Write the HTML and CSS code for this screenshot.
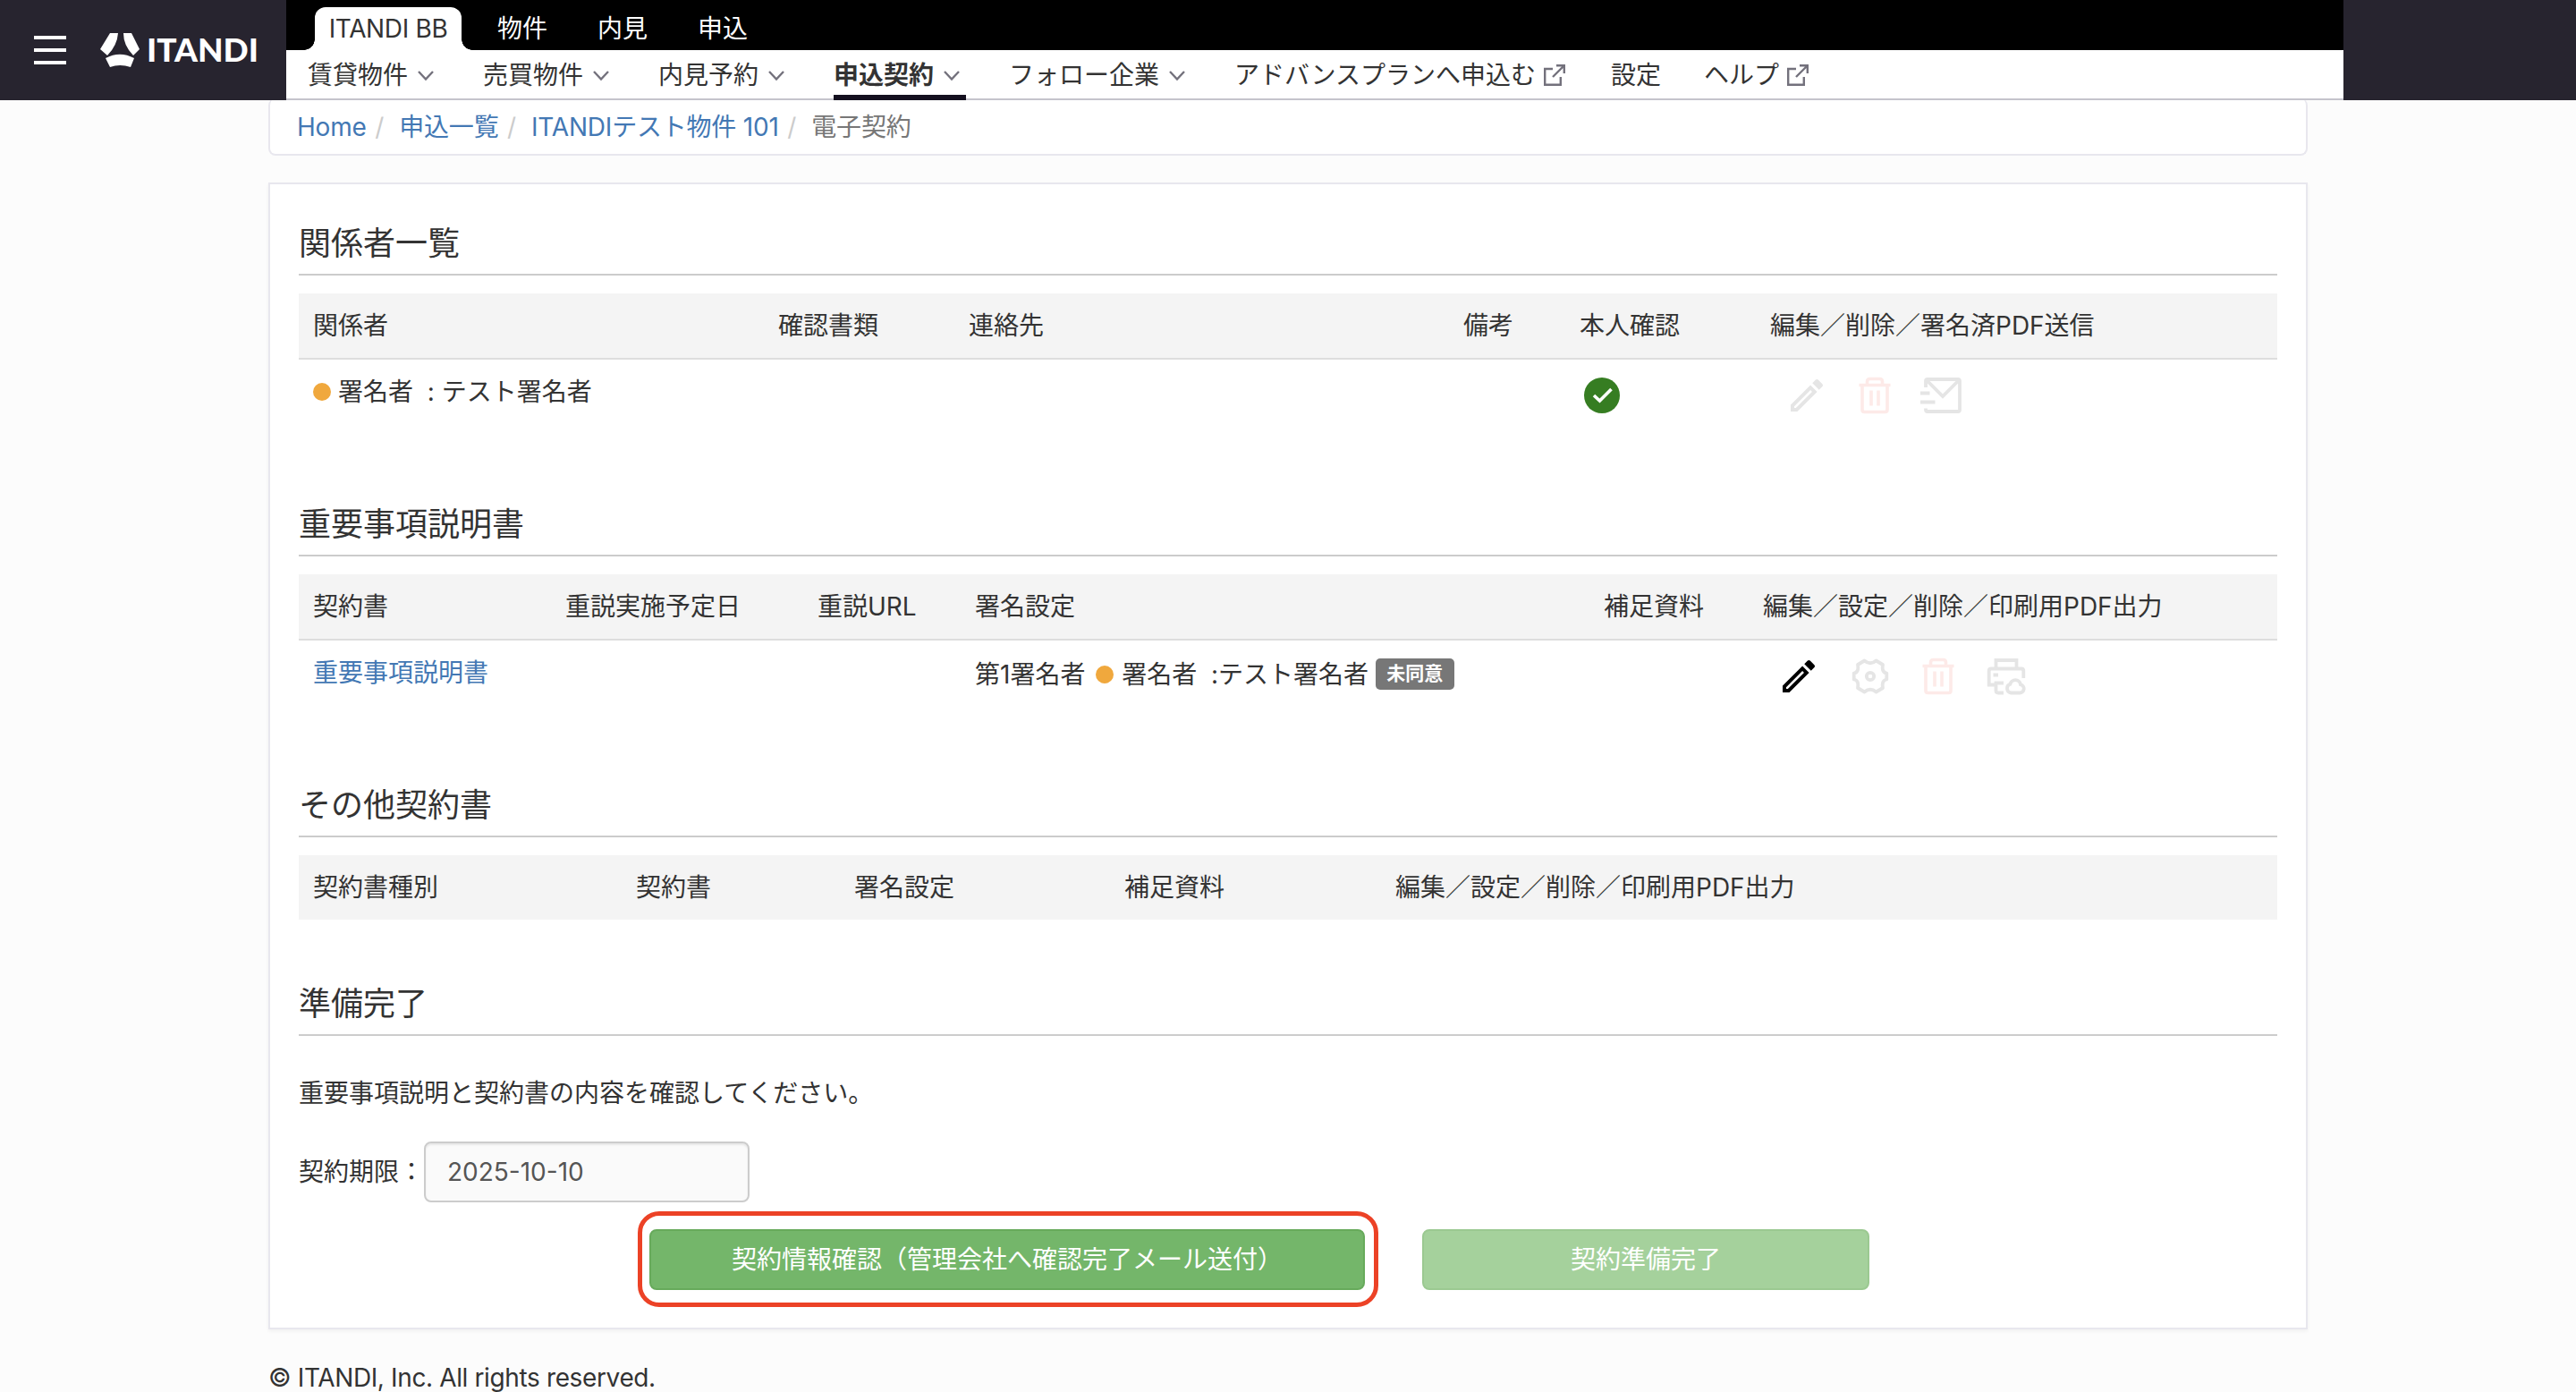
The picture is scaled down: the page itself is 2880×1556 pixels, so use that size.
FILE: index.html
```html
<!DOCTYPE html>
<html lang="ja">
<head>
  <meta charset="UTF-8">
  <meta name="viewport" content="width=device-width, initial-scale=1.0">
  <title>電子契約 | ITANDI BB</title>
  <link rel="stylesheet" href="styles.css">
</head>
<body>

  <!-- icons -->
  <svg class="icon-defs" width="0" height="0">
    <symbol id="chevron" viewBox="0 0 32 32"><path d="M8 12l8 8.500 8-8.500" fill="none" stroke="#73717c" stroke-width="2.400"/></symbol>
    <symbol id="external" viewBox="0 0 24 24"><path d="M10 5H1.200v17.800H18.800V14M14 1.200h8.800V10M22.500 1.500L10 14" fill="none" stroke="#73717c" stroke-width="2.400"/></symbol>
    <symbol id="pencil" viewBox="0 0 24 24"><path fill="currentColor" d="M14.060 9.020l.92.92L5.920 19H5v-.92l9.060-9.060M17.660 3c-.25 0-.51.1-.7.290l-1.830 1.830 3.750 3.750 1.830-1.830c.39-.39.39-1.020 0-1.410l-2.340-2.340c-.2-.2-.45-.29-.71-.29zm-3.600 3.190L3 17.250V21h3.750L17.810 9.940l-3.750-3.750z"/></symbol>
    <symbol id="trash" viewBox="0 0 48 48"><path d="M6.500 12.500h35M15.500 12V8.500q0-3 3-3h11q3 0 3 3V12M10 13v27q0 2.500 2.500 2.500h23q2.500 0 2.500-2.500V13M20 18.500v17M28 18.500v17" fill="none" stroke="currentColor" stroke-width="3.600"/></symbol>
    <symbol id="mail" viewBox="0 0 48 48"><path d="M8 15V8q0-2 2-2h34q2 0 2 2v32q0 2-2 2H10q-2 0-2-2v-1.500M9 7l18 18L45 7M2 21.500h10.500M2 31.500h16.500" fill="none" stroke="currentColor" stroke-width="3.800"/></symbol>
    <symbol id="gear" viewBox="0 0 48 48"><path d="M17.500 6.500q6.500 5.500 13 0l7.500 4.500q-1.500 8.500 4.300 9.500v7q-5.800 1-4.300 9.500l-7.500 4.500q-6.500-5.500-13 0L10 37q1.500-8.500-4.300-9.500v-7q5.800-1 4.300-9.500z" fill="none" stroke="currentColor" stroke-width="3.800" stroke-linejoin="round"/><circle cx="24" cy="24" r="4.200" fill="none" stroke="currentColor" stroke-width="3.800"/></symbol>
    <symbol id="printer" viewBox="0 0 48 48"><path d="M12.500 14V6h23v8M12 33.500H4.700V18q0-2.500 2.500-2.500h33.600q2.500 0 2.500 2.500v8M21 31.500H12.500V40q0 2.500 2.500 2.500h6" fill="none" stroke="currentColor" stroke-width="3.800"/><path d="M9.500 20.500h5.500v4H9.500z" fill="currentColor"/><path d="M29.500 42.500h9.500a4.700 4.700 0 0 0 1-9.300 5.900 5.900 0 0 0-11.600-.4 5 5 0 0 0 1.100 9.700z" fill="none" stroke="currentColor" stroke-width="3.800"/></symbol>
  </svg>

  <header class="header">
    <div class="brand">
      <div class="menu-btn"><span></span><span></span><span></span></div>
      <svg class="logo" width="190" height="48" viewBox="0 0 190 48">
        <path d="M11 5h9q-1 14-12 25L0 23z M26 5h9l9 18-7 7Q26 19 26 5z M6 33q16-8.500 32 0l-4 10q-12-4-23 0z" fill="#fff"/>
        <text class="logo-text" x="52" y="37" textLength="125" lengthAdjust="spacingAndGlyphs">ITANDI</text>
      </svg>
    </div>
    <div class="navs">
      <div class="product-nav">
        <a class="tab active">ITANDI BB</a>
        <a class="tab">物件</a>
        <a class="tab">内見</a>
        <a class="tab">申込</a>
      </div>
      <nav class="main-nav">
        <a>賃貸物件<svg class="chevron"><use href="#chevron"/></svg></a>
        <a>売買物件<svg class="chevron"><use href="#chevron"/></svg></a>
        <a>内見予約<svg class="chevron"><use href="#chevron"/></svg></a>
        <a class="current">申込契約<svg class="chevron"><use href="#chevron"/></svg></a>
        <a>フォロー企業<svg class="chevron"><use href="#chevron"/></svg></a>
        <a>アドバンスプランへ申込む<svg class="external"><use href="#external"/></svg></a>
        <a>設定</a>
        <a>ヘルプ<svg class="external"><use href="#external"/></svg></a>
      </nav>
    </div>
  </header>

  <main class="container">
    <ol class="breadcrumb">
      <li><a>Home</a></li>
      <li><a>申込一覧</a></li>
      <li><a>ITANDIテスト物件 101</a></li>
      <li>電子契約</li>
    </ol>

    <div class="card">
      <section class="block">
        <h2>関係者一覧</h2>
        <table class="parties">
          <thead>
            <tr>
              <th>関係者</th>
              <th>確認書類</th>
              <th>連絡先</th>
              <th>備考</th>
              <th>本人確認</th>
              <th>編集／削除／署名済PDF送信</th>
            </tr>
          </thead>
          <tbody>
            <tr>
              <td><span class="dot"></span>署名者&nbsp; : テスト署名者</td>
              <td></td>
              <td></td>
              <td></td>
              <td>
                <svg class="check" viewBox="0 0 40 40"><circle cx="20" cy="20" r="20" fill="#367d22"/><path d="M11 20l6.500 6L30.500 13" fill="none" stroke="#fff" stroke-width="3.600"/></svg>
              </td>
              <td>
                <div class="actions">
                  <svg class="disabled"><use href="#pencil"/></svg>
                  <svg class="danger"><use href="#trash"/></svg>
                  <svg class="disabled mail"><use href="#mail"/></svg>
                </div>
              </td>
            </tr>
          </tbody>
        </table>
      </section>

      <section class="block">
        <h2>重要事項説明書</h2>
        <table class="important">
          <thead>
            <tr>
              <th>契約書</th>
              <th>重説実施予定日</th>
              <th>重説URL</th>
              <th>署名設定</th>
              <th>補足資料</th>
              <th>編集／設定／削除／印刷用PDF出力</th>
            </tr>
          </thead>
          <tbody>
            <tr>
              <td><a>重要事項説明書</a></td>
              <td></td>
              <td></td>
              <td class="signer">第1署名者 <span class="dot"></span> 署名者&nbsp; :テスト署名者 <span class="label">未同意</span></td>
              <td></td>
              <td>
                <div class="actions">
                  <svg><use href="#pencil"/></svg>
                  <svg class="disabled gear"><use href="#gear"/></svg>
                  <svg class="danger"><use href="#trash"/></svg>
                  <svg class="disabled"><use href="#printer"/></svg>
                </div>
              </td>
            </tr>
          </tbody>
        </table>
      </section>

      <section class="block">
        <h2>その他契約書</h2>
        <table class="others">
          <thead>
            <tr>
              <th>契約書種別</th>
              <th>契約書</th>
              <th>署名設定</th>
              <th>補足資料</th>
              <th>編集／設定／削除／印刷用PDF出力</th>
            </tr>
          </thead>
        </table>
      </section>

      <section class="ready">
        <h2>準備完了</h2>
        <p>重要事項説明と契約書の内容を確認してください。</p>
        <div class="deadline">
          <label for="deadline">契約期限：</label>
          <input id="deadline" type="text" value="2025-10-10" readonly>
        </div>
        <div class="buttons">
          <button class="btn btn-confirm">契約情報確認（管理会社へ確認完了メール送付）</button>
          <button class="btn btn-done" disabled>契約準備完了</button>
        </div>
      </section>
    </div>

    <footer>© ITANDI, Inc. All rights reserved.</footer>
  </main>

</body>
</html>
```
FILE: styles.css
```css
* {
  box-sizing: border-box;
}
body {
  margin: 0;
  height: 1556px;
  overflow: hidden;
  background: #fcfcfc;
  color: #333;
  font-family: Inter, "Noto Sans CJK JP", sans-serif;
  font-size: 28px;
  line-height: 40px;
}
a {
  color: #4378b4;
  text-decoration: none;
}
.icon-defs {
  display: block;
}

/* Header */
.header {
  position: relative;
  z-index: 1;
  display: flex;
  height: 112px;
  background: #27242f;
}
.brand {
  display: flex;
  align-items: center;
  width: 320px;
  padding-left: 38px;
}
.menu-btn {
  display: flex;
  flex-direction: column;
  gap: 10px;
  width: 36px;
  margin-right: 38px;
}
.menu-btn span {
  height: 4px;
  background: #fff;
}
.logo-text {
  fill: #fff;
  font-family: Lato, sans-serif;
  font-size: 36px;
  font-weight: 900;
}
.navs {
  width: 2300px;
}
.product-nav {
  display: flex;
  height: 56px;
  padding: 8px 0 0 32px;
  background: #000;
}
.tab {
  padding: 0 28px;
  color: #fff;
  line-height: 48px;
}
.tab.active {
  position: relative;
  width: 164px;
  margin-right: 12px;
  padding: 0;
  text-align: center;
  letter-spacing: -0.35px;
  color: #333;
  background: #fff;
  border-radius: 12px 12px 0 0;
}
/* rounded feet of the active tab */
.tab.active::before,
.tab.active::after {
  content: "";
  position: absolute;
  bottom: 0;
  width: 12px;
  height: 12px;
}
.tab.active::before {
  left: -12px;
  background: radial-gradient(circle at 0 0, #000 11.5px, #fff 12px);
}
.tab.active::after {
  right: -12px;
  background: radial-gradient(circle at 100% 0, #000 11.5px, #fff 12px);
}
.main-nav {
  display: flex;
  gap: 48px;
  height: 56px;
  padding-left: 24px;
  background: #fff;
  border-bottom: 2px solid #c5c4cc;
}
.main-nav a {
  display: flex;
  height: 56px;
  padding-bottom: 1px;
  align-items: center;
  color: #333;
}
.main-nav .current {
  padding: 5px 0 0;
  border-bottom: 6px solid #14101f;
  font-weight: bold;
}
.chevron {
  width: 32px;
  height: 32px;
  margin-left: 4px;
}
.external {
  width: 24px;
  height: 24px;
  margin: 0 3px 0 9px;
}

/* Breadcrumb */
.container {
  width: 2280px;
  margin: 0 auto;
}
.breadcrumb {
  display: flex;
  height: 64px;
  margin: -2px 0 30px;
  padding: 12px 30px;
  list-style: none;
  background: #fff;
  border: 2px solid #e8e7ee;
  border-top: 0;
  border-radius: 8px;
  color: #777;
  letter-spacing: -0.2px;
}
.breadcrumb li + li::before {
  content: "/\00a0";
  padding: 0 9.5px;
  color: #ccc;
}

/* Card */
.card {
  height: 1282px;
  padding: 45px 32px 0;
  background: #fff;
  border: 2px solid #e8e7ee;
  box-shadow: 0 2px 4px rgba(0, 0, 0, 0.05);
}
.block {
  margin-bottom: 73px;
}
h2 {
  margin: 0 0 20px;
  padding: 1px 0 14px;
  border-bottom: 2px solid #ccc;
  font-size: 36px;
  font-weight: 400;
  line-height: 40px;
}

/* Tables */
table {
  width: 100%;
  table-layout: fixed;
  border-collapse: separate;
  border-spacing: 0;
}
th {
  height: 72px;
  padding: 0 16px;
  background: #f4f4f4;
  font-weight: 400;
  text-align: left;
  white-space: nowrap;
}
td {
  height: 92px;
  padding: 16px 16px 0;
  border-top: 2px solid #ddd;
  vertical-align: top;
  white-space: nowrap;
}
.parties th:nth-child(1) { width: 520px; }
.parties th:nth-child(2) { width: 213px; }
.parties th:nth-child(3) { width: 553px; }
.parties th:nth-child(4) { width: 130px; }
.parties th:nth-child(5) { width: 213px; }
.important th:nth-child(1) { width: 282px; }
.important th:nth-child(2) { width: 282px; }
.important th:nth-child(3) { width: 176px; }
.important th:nth-child(4) { width: 703px; }
.important th:nth-child(5) { width: 178px; }
.others th:nth-child(1) { width: 361px; }
.others th:nth-child(2) { width: 244px; }
.others th:nth-child(3) { width: 302px; }
.others th:nth-child(4) { width: 303px; }
.dot {
  display: inline-block;
  width: 20px;
  height: 20px;
  margin-right: 8px;
  border-radius: 50%;
  background: #f0a83d;
}
.signer {
  padding-top: 18px;
}
.signer .dot {
  margin: 0 1px 0 4px;
}
.label {
  display: inline-block;
  height: 35px;
  padding: 0 12.5px;
  border-radius: 5px;
  background: #777;
  color: #fff;
  font-size: 21px;
  font-weight: bold;
  line-height: 33px;
  vertical-align: 4px;
}
.check {
  display: block;
  width: 40px;
  height: 40px;
  margin: 4px 0 0 5px;
}
.actions {
  display: flex;
  gap: 28px;
  padding-left: 17px;
}
.actions svg {
  width: 48px;
  height: 48px;
  color: #000;
}
.actions .disabled {
  color: #e5e5e5;
}
.actions .danger {
  color: #fdeae8;
}
.actions .mail {
  margin-left: -3px;
}
.actions .gear {
  margin-left: 4px;
}
.important .actions {
  padding-left: 16px;
}

/* Ready */
.ready p {
  margin: 44px 0 34px;
}
.deadline {
  display: flex;
  align-items: center;
}
.deadline input {
  width: 364px;
  height: 68px;
  padding: 0 24px;
  border: 2px solid #ccc;
  border-radius: 8px;
  background: #fafafa;
  box-shadow: inset 0 2px 2px rgba(0, 0, 0, 0.075);
  color: #555;
  font: inherit;
}
.buttons {
  display: flex;
  justify-content: center;
  margin-top: 30px;
}
.btn {
  position: relative;
  height: 68px;
  margin-right: 64px;
  padding: 0 0 1px;
  border: 2px solid #67aa5b;
  border-radius: 8px;
  background: #74b66a;
  color: #fff;
  font: inherit;
}
.btn-confirm {
  width: 800px;
}
.btn-confirm::after {
  content: "";
  position: absolute;
  inset: -22px -17px -21px -15px;
  border: 5px solid #ec4226;
  border-radius: 24px;
}
.btn-done {
  width: 500px;
  background: #a5d19c;
  border-color: #9bc991;
}

footer {
  padding-top: 34px;
  letter-spacing: -0.37px;
}
```
